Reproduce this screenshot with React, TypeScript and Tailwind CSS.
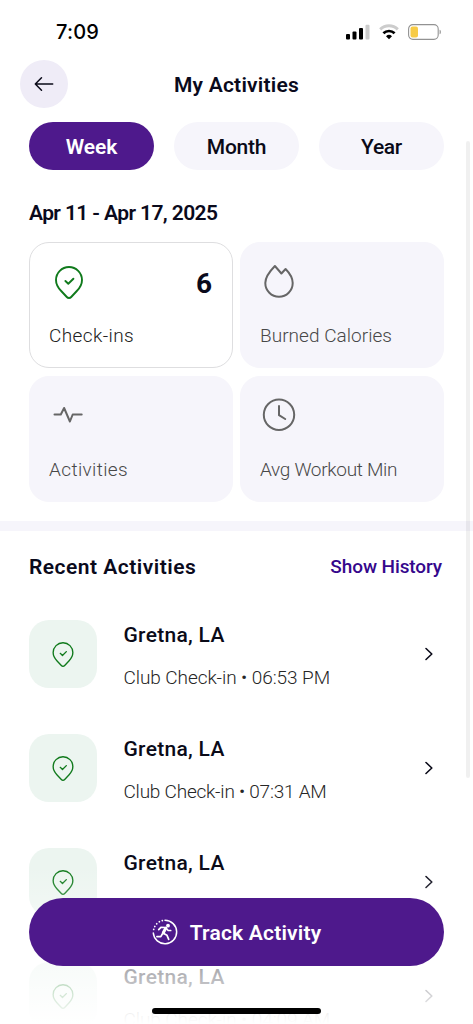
import { ReactNode } from "react";
import clsx from "clsx";

interface IconProps {
  className?: string;
  strokeWidth?: number;
}

interface StatCardProps {
  icon: ReactNode;
  label: string;
  labelClassName?: string;
  value?: string;
  active?: boolean;
}

interface Activity {
  place: string;
  detail: string;
  detailClassName: string;
}

const tabs = [
  { label: "Week", className: "bg-[#4e198c] font-semibold text-white tracking-[-0.1px]" },
  { label: "Month", className: "bg-[#f6f5fb] font-medium text-[#0a0a18] tracking-[-0.24px]" },
  { label: "Year", className: "bg-[#f6f5fb] font-medium text-[#0a0a18] tracking-[-0.3px]" },
];

const activities: Activity[] = [
  { place: "Gretna, LA", detail: "Club Check-in • 06:53 PM", detailClassName: "tracking-[-0.08px]" },
  { place: "Gretna, LA", detail: "Club Check-in • 07:31 AM", detailClassName: "tracking-[-0.23px]" },
  { place: "Gretna, LA", detail: "Club Check-in • 05:42 PM", detailClassName: "tracking-[-0.08px]" },
  { place: "Gretna, LA", detail: "Club Check-in • 04:09 AM", detailClassName: "tracking-[-0.08px]" },
];

function PinIcon({ className, strokeWidth = 1.9 }: IconProps) {
  return (
    <svg viewBox="0 0 28 33" fill="none" stroke="currentColor" strokeWidth={strokeWidth} strokeLinecap="round" strokeLinejoin="round" className={className}>
      <path d="M14 1C6.8 1 1 6.8 1 14c0 4.4 2.2 8 5.2 11l5.6 6c1.2 1.3 3.2 1.3 4.4 0l5.6-6c3-3 5.2-6.6 5.2-11C27 6.8 21.2 1 14 1z" />
      <path d="M10.4 15l2.9 2.7 5.1-5" />
    </svg>
  );
}

function FlameIcon() {
  return (
    <svg viewBox="0 0 30 34" fill="none" stroke="currentColor" strokeWidth="2" strokeLinejoin="round" className="h-[34px] w-[30px]">
      <path d="M10.9 2l6.5 7.5 4.2-4.5C26 9.5 28.7 14 28.7 19a13.7 13.7 0 0 1-27.4 0C1.3 12.500 6 7 10.900 2z" />
    </svg>
  );
}

function PulseIcon() {
  return (
    <svg viewBox="0 0 30 34" fill="none" stroke="currentColor" strokeWidth="2" strokeLinecap="round" strokeLinejoin="round" className="h-[34px] w-[30px]">
      <path d="M1.5 16.5h6.3l3.3-6.5L16.9 23.5l2.8-7h9" />
    </svg>
  );
}

function ClockIcon() {
  return (
    <svg viewBox="0 0 34 34" fill="none" stroke="currentColor" strokeWidth="2" strokeLinecap="round" strokeLinejoin="round" className="h-[34px] w-[34px]">
      <circle cx="17" cy="16.8" r="15.2" />
      <path d="M17 8v9.2l6.2 3.8" />
    </svg>
  );
}

function RunIcon() {
  return (
    <svg viewBox="0 0 26 26" fill="none" stroke="currentColor" strokeLinecap="round" strokeLinejoin="round" className="h-[26px] w-[26px]">
      <path d="M13 1.3A11.7 11.7 0 1 1 1.3 14" strokeWidth="1.5" />
      <path d="M1.7 10.5A11.7 11.7 0 0 1 10.8 1.5" strokeWidth="1.7" strokeDasharray="0.1 3.1" />
      <circle cx="16" cy="6.7" r="1.9" fill="currentColor" stroke="none" />
      <path d="M13.7 9.2l-2.4 4.6" strokeWidth="3" />
      <path d="M6.7 10.6l2.2-2.3 4.6.2 2.7 3h2.5M11.3 14.3l3.7 2 1.7 4M10.3 15l-1.5 2.6H4.9" strokeWidth="1.7" />
    </svg>
  );
}

function StatusBar() {
  return (
    <div className="flex h-[60px] shrink-0 items-start justify-between pt-[17px] pr-[31px] pl-14">
      <span className="font-['Inter'] text-[20px] leading-[30px] font-medium tracking-[0.2px] text-black">7:09</span>
      <div className="flex h-[29px] items-center">
        <svg viewBox="0 0 24 16" className="mr-[9px] h-4 w-6">
          <rect x="0" y="10" width="4" height="5.5" rx="1" />
          <rect x="6.5" y="7.5" width="4" height="8" rx="1" />
          <rect x="13" y="4" width="4" height="11.5" rx="1" />
          <rect x="19.5" y="0.7" width="4" height="14.8" rx="1" fill="#cccccc" />
        </svg>
        <svg viewBox="0 0 20 16" fill="none" className="mr-[9px] h-4 w-5">
          <path d="M1.2 5.4a12.7 12.7 0 0 1 17.6 0" stroke="#cccccc" strokeWidth="3" />
          <path d="M4.4 9.2a8.2 8.2 0 0 1 11.2 0" stroke="black" strokeWidth="2.7" />
          <path d="M10 15.3l-3-3.1a4.3 4.3 0 0 1 6 0z" fill="black" />
        </svg>
        <svg viewBox="0 0 34 16" fill="none" className="h-4 w-[34px]">
          <rect x="0.6" y="0.6" width="29.6" height="14.8" rx="4.3" stroke="#929292" strokeWidth="1.1" />
          <rect x="2.5" y="2.5" width="7.5" height="11" rx="2" fill="#f7cb45" />
          <path d="M31.7 5.7c1.3.5 1.3 4.1 0 4.6z" fill="#777777" />
        </svg>
      </div>
    </div>
  );
}

function StatCard({ icon, label, labelClassName, value, active }: StatCardProps) {
  return (
    <div
      className={clsx(
        "flex h-[126px] flex-col justify-between rounded-[20px] border pr-5 pb-[17px] pl-[19px]",
        active ? "border-[#dedee0] bg-white pt-[21px]" : "border-[#f6f5fb] bg-[#f6f5fb] pt-5"
      )}
    >
      <div className="flex h-[36px] items-center justify-between">
        <div className={clsx("flex justify-center", active ? "w-10 text-[#107a1c]" : "w-[38px] text-[#666666]")}>
          {icon}
        </div>
        {value && <span className="pt-[3px] text-[28px] leading-8 font-bold text-[#0a0a1c]">{value}</span>}
      </div>
      <span
        className={clsx(
          "text-[19px] leading-7 font-light",
          active ? "text-[#222222]" : "text-[#484848]",
          labelClassName
        )}
      >
        {label}
      </span>
    </div>
  );
}

function ActivityRow({ place, detail, detailClassName }: Activity) {
  return (
    <div className="flex h-[114px] shrink-0 items-start">
      <div className="flex h-[68px] w-[68px] shrink-0 items-center justify-center rounded-[20px] bg-[#ecf5f0] text-[#107a1c]">
        <PinIcon className="h-[25px] w-[22px]" strokeWidth={1.8} />
      </div>
      <div className="flex flex-1 flex-col gap-[15px] pt-px pl-[26.5px]">
        <span className="text-[21px] leading-7 font-medium tracking-[0.3px] text-[#0a0a18]">{place}</span>
        <span className={clsx("text-[19px] leading-7 font-light whitespace-nowrap text-[#262626]", detailClassName)}>
          {detail}
        </span>
      </div>
      <div className="flex h-[68px] w-[30px] items-center justify-center">
        <svg viewBox="0 0 10 14" fill="none" stroke="#0a0a18" strokeWidth="1.6" strokeLinecap="round" strokeLinejoin="round" className="h-3.5 w-2.5">
          <path d="M2 1.5L7.8 7 2 12.5" />
        </svg>
      </div>
    </div>
  );
}

export default function App() {
  return (
    <div className="relative flex h-[1024px] w-[473px] flex-col overflow-hidden bg-white font-['Roboto',sans-serif]">
      <StatusBar />

      <header className="grid h-12 shrink-0 grid-cols-[48px_1fr_48px] items-center px-[19.5px]">
        <button className="flex h-12 w-12 items-center justify-center rounded-full bg-[#efecf7]">
          <svg viewBox="0 0 20 16" fill="none" stroke="#0a0a18" strokeWidth="1.5" strokeLinecap="round" strokeLinejoin="round" className="h-4 w-5">
            <path d="M18.7 8H1.3M7.5 1.8L1.3 8l6.2 6.2" />
          </svg>
        </button>
        <h1 className="pt-0.5 text-center text-[21px] leading-7 font-semibold tracking-[0.22px] text-[#0a0a1c]">
          My Activities
        </h1>
      </header>

      <nav className="mt-[14px] grid shrink-0 grid-cols-3 gap-5 px-[29px]">
        {tabs.map((tab) => (
          <button key={tab.label} className={clsx("h-12 rounded-full pt-0.5 text-[21px] leading-7", tab.className)}>
            {tab.label}
          </button>
        ))}
      </nav>

      <section className="shrink-0 px-[29px] pt-[29px]">
        <h2 className="text-[21px] leading-7 font-semibold tracking-[-0.6px] text-[#0a0a1c]">Apr 11 - Apr 17, 2025</h2>
        <div className="mt-[15px] grid grid-cols-2 gap-x-[7px] gap-y-2">
          <StatCard
            active
            value="6"
            icon={<PinIcon className="h-[33px] w-[28px]" />}
            label="Check-ins"
            labelClassName="tracking-[0.39px]"
          />
          <StatCard icon={<FlameIcon />} label="Burned Calories" labelClassName="tracking-[0.03px]" />
          <StatCard icon={<PulseIcon />} label="Activities" labelClassName="tracking-[0.37px]" />
          <StatCard icon={<ClockIcon />} label="Avg Workout Min" labelClassName="tracking-[-0.3px]" />
        </div>
      </section>

      <div className="mt-[19px] h-2.5 shrink-0 bg-[#f6f5fb]" />

      <section className="flex shrink-0 flex-col px-[29px] pt-[22px]">
        <div className="flex items-center justify-between pr-0.5">
          <h2 className="text-[21px] leading-7 font-semibold tracking-[0.49px] text-[#0a0a1c]">Recent Activities</h2>
          <a className="text-[19px] leading-7 font-medium tracking-[-0.1px] text-[#35078c]">Show History</a>
        </div>
        <div className="mt-[39px] flex flex-col">
          {activities.map((activity, index) => (
            <ActivityRow key={index} {...activity} />
          ))}
        </div>
      </section>

      {/* Scroll indicator */}
      <div className="absolute top-[141px] right-[3.5px] h-[637px] w-[3.5px] rounded-full bg-black/6" />

      {/* Sticky footer */}
      <div className="absolute inset-x-0 bottom-0 flex h-[176px] flex-col items-center bg-linear-to-b from-white/0 from-10% to-white px-[29px] pt-[50px]">
        <button className="flex h-[68px] w-full shrink-0 items-center justify-center gap-3 rounded-full bg-[#4e198c] text-white">
          <RunIcon />
          <span className="pt-0.5 text-[21px] leading-7 font-semibold tracking-[0.2px]">Track Activity</span>
        </button>
        <div className="mt-[42px] h-1.5 w-[169px] shrink-0 rounded-full bg-black" />
      </div>
    </div>
  );
}
